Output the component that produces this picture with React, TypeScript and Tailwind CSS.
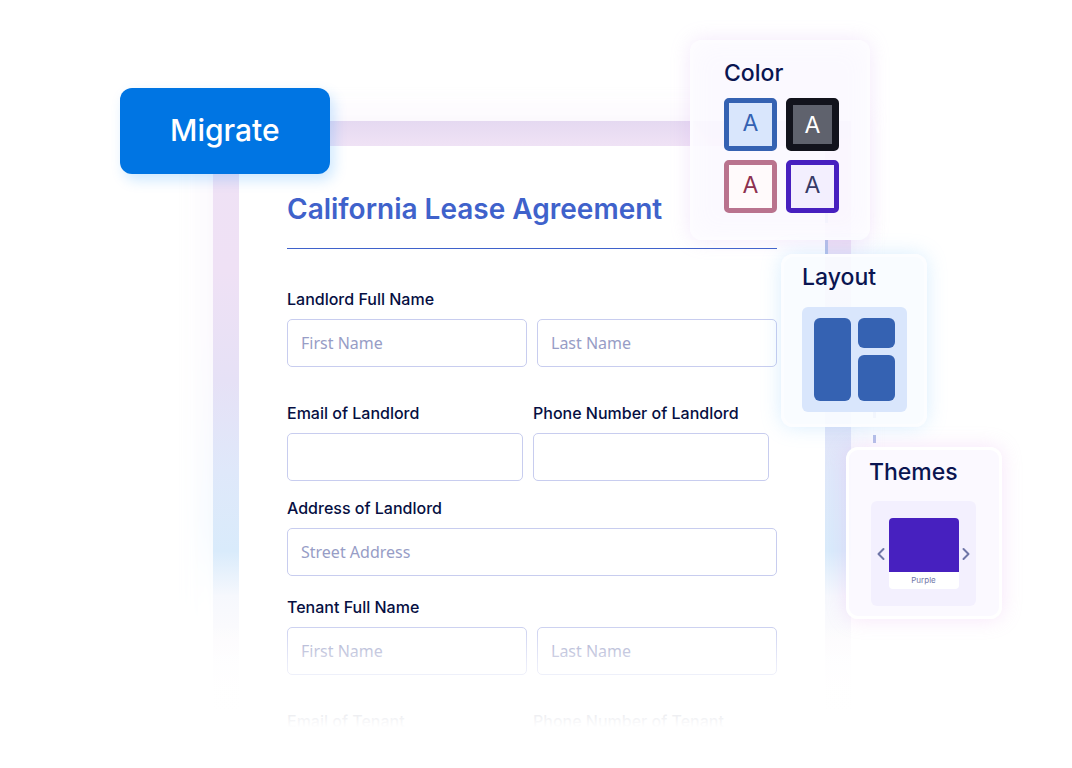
import { useId } from "react";
import type { ReactNode } from "react";
import clsx from "clsx";

const SWATCHES = [
  { name: "Blue", className: "border-[5px] border-[#3562b2] bg-[#d9e6fc] text-[#3562b2] pb-1" },
  { name: "Dark", className: "border-[7px] border-[#12131c] bg-[#5f626d] text-white" },
  { name: "Rose", className: "border-[5px] border-[#b9738e] bg-[#fffafb] text-[#8d3150] pb-1" },
  { name: "Purple", className: "border-[5px] border-[#4720bf] bg-[#f3effe] text-[#373b66] pb-1" },
];

function TextInput({ id, label, placeholder }: { id?: string; label?: string; placeholder?: string }) {
  return (
    <input
      id={id}
      type="text"
      aria-label={label}
      placeholder={placeholder}
      className="h-12 w-full min-w-0 rounded-[5px] border border-[#c8cdef] bg-white px-[13px] font-['Noto_Sans',sans-serif] text-base text-[#0a1551] placeholder:text-[#979dc6]"
    />
  );
}

function Field({ label, placeholder }: { label: string; placeholder?: string }) {
  const id = useId();
  return (
    <div className="flex min-w-0 flex-1 flex-col gap-2">
      <label htmlFor={id} className="text-base leading-6 font-medium">
        {label}
      </label>
      <TextInput id={id} placeholder={placeholder} />
    </div>
  );
}

function NameField({ label }: { label: string }) {
  const id = useId();
  return (
    <div className="flex flex-col gap-2">
      <label htmlFor={id} className="text-base leading-6 font-medium">
        {label}
      </label>
      <div className="flex gap-2.5">
        <TextInput id={id} placeholder="First Name" />
        <TextInput label={`${label}, last`} placeholder="Last Name" />
      </div>
    </div>
  );
}

function Panel({ title, className, children }: { title: string; className: string; children: ReactNode }) {
  return (
    <section className={clsx("absolute rounded-xl border-[3px]", className)}>
      <h2 className="text-[23px] leading-8 font-medium text-[#0a1551]">{title}</h2>
      {children}
    </section>
  );
}

function Chevron({ d }: { d: string }) {
  return (
    <svg viewBox="0 0 8 14" fill="none" stroke="#6f76a7" strokeWidth="2" strokeLinecap="round" strokeLinejoin="round" className="h-3.5 w-2">
      <path d={d} />
    </svg>
  );
}

// Dashed connectors that run between the floating panels
function Connector({ className, length, dash }: { className: string; length: number; dash: string }) {
  return (
    <svg width="3" height={length} className={clsx("absolute", className)} aria-hidden="true">
      <line x1="1.5" y1="0" x2="1.5" y2={length} stroke="#b5c0e8" strokeWidth="3" strokeDasharray={dash} />
    </svg>
  );
}

export default function App() {
  return (
    <main className="min-h-screen overflow-hidden bg-white pt-[121px] pr-[221px] pl-[213px] font-[Inter,sans-serif] text-[#060f42]">
      <div className="relative">
        {/* Soft glow around the frame */}
        <div className="absolute -inset-x-3 -top-3 bottom-0 bg-[linear-gradient(180deg,#efe2f6_0px,#efe2f6_220px,#d6eafc_420px,#ffffff_500px)] opacity-25 blur-md" />

        {/* Form frame */}
        <div className="relative bg-[linear-gradient(180deg,#e5d9f1_0px,#efe2f5_24px,#efe1f5_150px,#e6e1f6_260px,#dfe8fa_350px,#d9ebfb_430px,#f6f8fd_475px,#fcfbfd_520px,#ffffff_590px)] px-[26px] pt-[25px]">
          <div className="bg-white px-12 pt-[42px]">
            <h1 className="border-b border-b-[#3f62cb] pb-[18px] text-[28px] leading-[42px] font-semibold text-[#3f62cb]">
              California Lease Agreement
            </h1>
            <form className="pt-[38px]">
              <NameField label="Landlord Full Name" />
              <div className="mt-[34px] flex gap-2.5 pr-2">
                <Field label="Email of Landlord" />
                <Field label="Phone Number of Landlord" />
              </div>
              <div className="mt-[15px] flex">
                <Field label="Address of Landlord" placeholder="Street Address" />
              </div>
              <div className="mt-[19px]">
                <NameField label="Tenant Full Name" />
              </div>
              <div className="mt-[34px] flex gap-2.5 pr-2 leading-6 font-medium">
                <p className="flex-1">Email of Tenant</p>
                <p className="flex-1">Phone Number of Tenant</p>
              </div>
            </form>
          </div>
        </div>

        {/* Bottom fade */}
        <div className="pointer-events-none absolute -inset-x-8 bottom-0 h-28 bg-linear-to-b from-white/0 via-white/65 via-40% to-white to-95%" />

        <Connector className="top-[92px] right-[23px]" length={41} dash="10 17 14" />
        <Connector className="top-[291px] -right-[25px]" length={31} dash="6 17 8" />

        <Panel
          title="Color"
          className="-top-[81px] -right-[19px] border-white/50 bg-[#fbf8ff]/90 pt-3.5 pr-7 pb-6 pl-[31px] shadow-[0_0_20px_rgba(200,150,235,0.22),inset_0_0_24px_rgba(255,255,255,0.6)]"
        >
          <div className="mt-[9px] grid grid-cols-2 gap-[9px]">
            {SWATCHES.map((s) => (
              <button
                key={s.name}
                type="button"
                aria-label={`A, ${s.name}`}
                className={clsx("flex size-[53px] items-center justify-center rounded-[5px] text-[23px] leading-6", s.className)}
              >
                A
              </button>
            ))}
          </div>
        </Panel>

        <Panel
          title="Layout"
          className="top-[133px] -right-[76px] border-white/50 bg-[#f8fcff]/90 pt-1 pr-[17px] pb-3 pl-[18px] shadow-[0_0_20px_rgba(120,195,250,0.28)]"
        >
          <div className="mt-3.5 flex size-[105px] gap-[7px] rounded-md bg-[#d9e6fc] px-3 py-[11px]">
            <div className="flex-1 rounded-md bg-[#3562b2]" />
            <div className="flex flex-1 flex-col gap-[7px]">
              <div className="h-[30px] rounded-md bg-[#3562b2]" />
              <div className="flex-1 rounded-md bg-[#3562b2]" />
            </div>
          </div>
        </Panel>

        <Panel
          title="Themes"
          className="top-[326px] -right-[151px] border-white bg-[#fbf9ff]/95 pt-1.5 pr-[23px] pb-2.5 pl-5 shadow-[0_0_20px_rgba(225,150,235,0.25)]"
        >
          <div className="mt-[13px] ml-0.5 flex size-[105px] items-center justify-between rounded-md bg-[#f3f0fe] px-1.5">
            <button type="button" aria-label="Previous theme">
              <Chevron d="M6.5 2 1.5 7l5 5" />
            </button>
            <div className="w-[70px] overflow-hidden rounded bg-white text-center">
              <div className="h-[54px] bg-[#4720bf]" />
              <p className="text-[8px] leading-[17px] text-[#6f76a7]">Purple</p>
            </div>
            <button type="button" aria-label="Next theme">
              <Chevron d="M1.5 2l5 5-5 5" />
            </button>
          </div>
        </Panel>

        <button
          type="button"
          className="absolute -top-[33px] -left-[93px] rounded-xl bg-[#0075e3] px-[50px] pt-[22px] pb-6 text-[30px] leading-10 font-medium text-white shadow-[4px_6px_14px_rgba(0,140,255,0.2)]"
        >
          Migrate
        </button>
      </div>
    </main>
  );
}
